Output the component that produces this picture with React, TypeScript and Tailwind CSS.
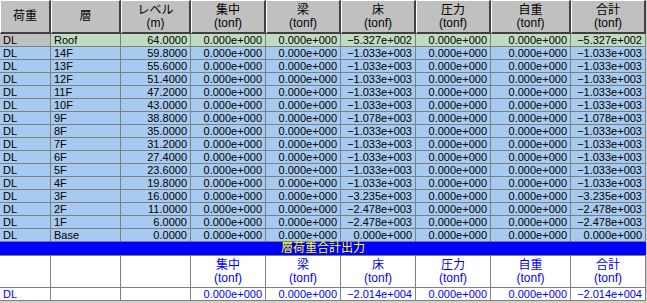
import React from 'react';

const grid = 'grid grid-cols-[51px_70px_70px_75px_75px_75px_75px_80px_75px]';

const heads: [string, string?][] = [
  ['荷重'],
  ['層'],
  ['レベル', '(m)'],
  ['集中', '(tonf)'],
  ['梁', '(tonf)'],
  ['床', '(tonf)'],
  ['圧力', '(tonf)'],
  ['自重', '(tonf)'],
  ['合計', '(tonf)'],
];

const z = '0.000e+000';

const floors: [string, string, string][] = [
  ['Roof', '64.0000', '−5.327e+002'],
  ['14F', '59.8000', '−1.033e+003'],
  ['13F', '55.6000', '−1.033e+003'],
  ['12F', '51.4000', '−1.033e+003'],
  ['11F', '47.2000', '−1.033e+003'],
  ['10F', '43.0000', '−1.033e+003'],
  ['9F', '38.8000', '−1.078e+003'],
  ['8F', '35.0000', '−1.033e+003'],
  ['7F', '31.2000', '−1.033e+003'],
  ['6F', '27.4000', '−1.033e+003'],
  ['5F', '23.6000', '−1.033e+003'],
  ['4F', '19.8000', '−1.033e+003'],
  ['3F', '16.0000', '−3.235e+003'],
  ['2F', '11.0000', '−2.478e+003'],
  ['1F', '6.0000', '−2.478e+003'],
  ['Base', '0.0000', z],
];

function HeadCell({ top, bottom }: { top: string; bottom?: string }) {
  return (
    <div className="h-[34px] bg-[#c0c0c0] border-t border-l border-white border-r-2 border-b-2 border-r-[#404040] border-b-[#404040] flex flex-col items-center justify-center text-[12px] leading-[13px] text-black">
      <span>{top}</span>
      {bottom && <span>{bottom}</span>}
    </div>
  );
}

export default function App() {
  return (
    <div className="w-[647px] h-[303px] bg-[#d4d0c8] overflow-hidden font-['Liberation_Sans','Noto_Sans_CJK_JP',sans-serif]">
      <div className={grid}>
        {heads.map(([t, b], i) => (
          <HeadCell key={i} top={t} bottom={b} />
        ))}
      </div>

      {floors.map(([name, level, floor], r) => {
        const isRoof = r === 0;
        const bg = isRoof ? 'bg-[#c0dcc0]' : 'bg-[#a6caf0]';
        const vals = [z, z, floor, z, z, floor];
        return (
          <div key={name} className={grid}>
            <div className={`h-[13px] border-r border-b border-[#808080] px-[3px] text-[11px] leading-[12px] ${isRoof ? 'bg-[#c0c0c0]' : bg}`}>DL</div>
            <div className={`h-[13px] border-r border-b border-[#808080] px-[3px] text-[11px] leading-[12px] ${bg}`}>{name}</div>
            <div className={`h-[13px] border-r border-b border-[#808080] px-[3px] text-[11px] leading-[12px] text-right ${bg}`}>{level}</div>
            {vals.map((v, i) => (
              <div key={i} className={`h-[13px] border-r border-b border-[#808080] px-[3px] text-[11px] leading-[12px] text-right ${bg}`}>{v}</div>
            ))}
          </div>
        );
      })}

      <div className="h-[14px] bg-[#0000ff] border-b border-[#808080] text-[#ffff00] text-[12px] leading-[13px] text-center w-[646px]">
        層荷重合計出力
      </div>

      <div className={grid}>
        {heads.map(([t, b], i) => (
          <div key={i} className="h-[32px] bg-white border-r border-b border-[#808080] flex flex-col items-center justify-center text-[12px] leading-[13px] text-[#0000ff]">
            {i >= 3 && (
              <>
                <span>{t}</span>
                <span>{b}</span>
              </>
            )}
          </div>
        ))}
      </div>

      <div className={grid}>
        <div className="h-[13px] bg-white border-r border-b border-[#808080] px-[3px] text-[11px] leading-[12px] text-[#0000ff]">DL</div>
        <div className="h-[13px] bg-white border-r border-b border-[#808080]" />
        <div className="h-[13px] bg-white border-r border-b border-[#808080]" />
        {[z, z, '−2.014e+004', z, z, '−2.014e+004'].map((v, i) => (
          <div key={i} className="h-[13px] bg-white border-r border-b border-[#808080] px-[3px] text-[11px] leading-[12px] text-right text-[#0000ff]">{v}</div>
        ))}
      </div>
    </div>
  );
}
